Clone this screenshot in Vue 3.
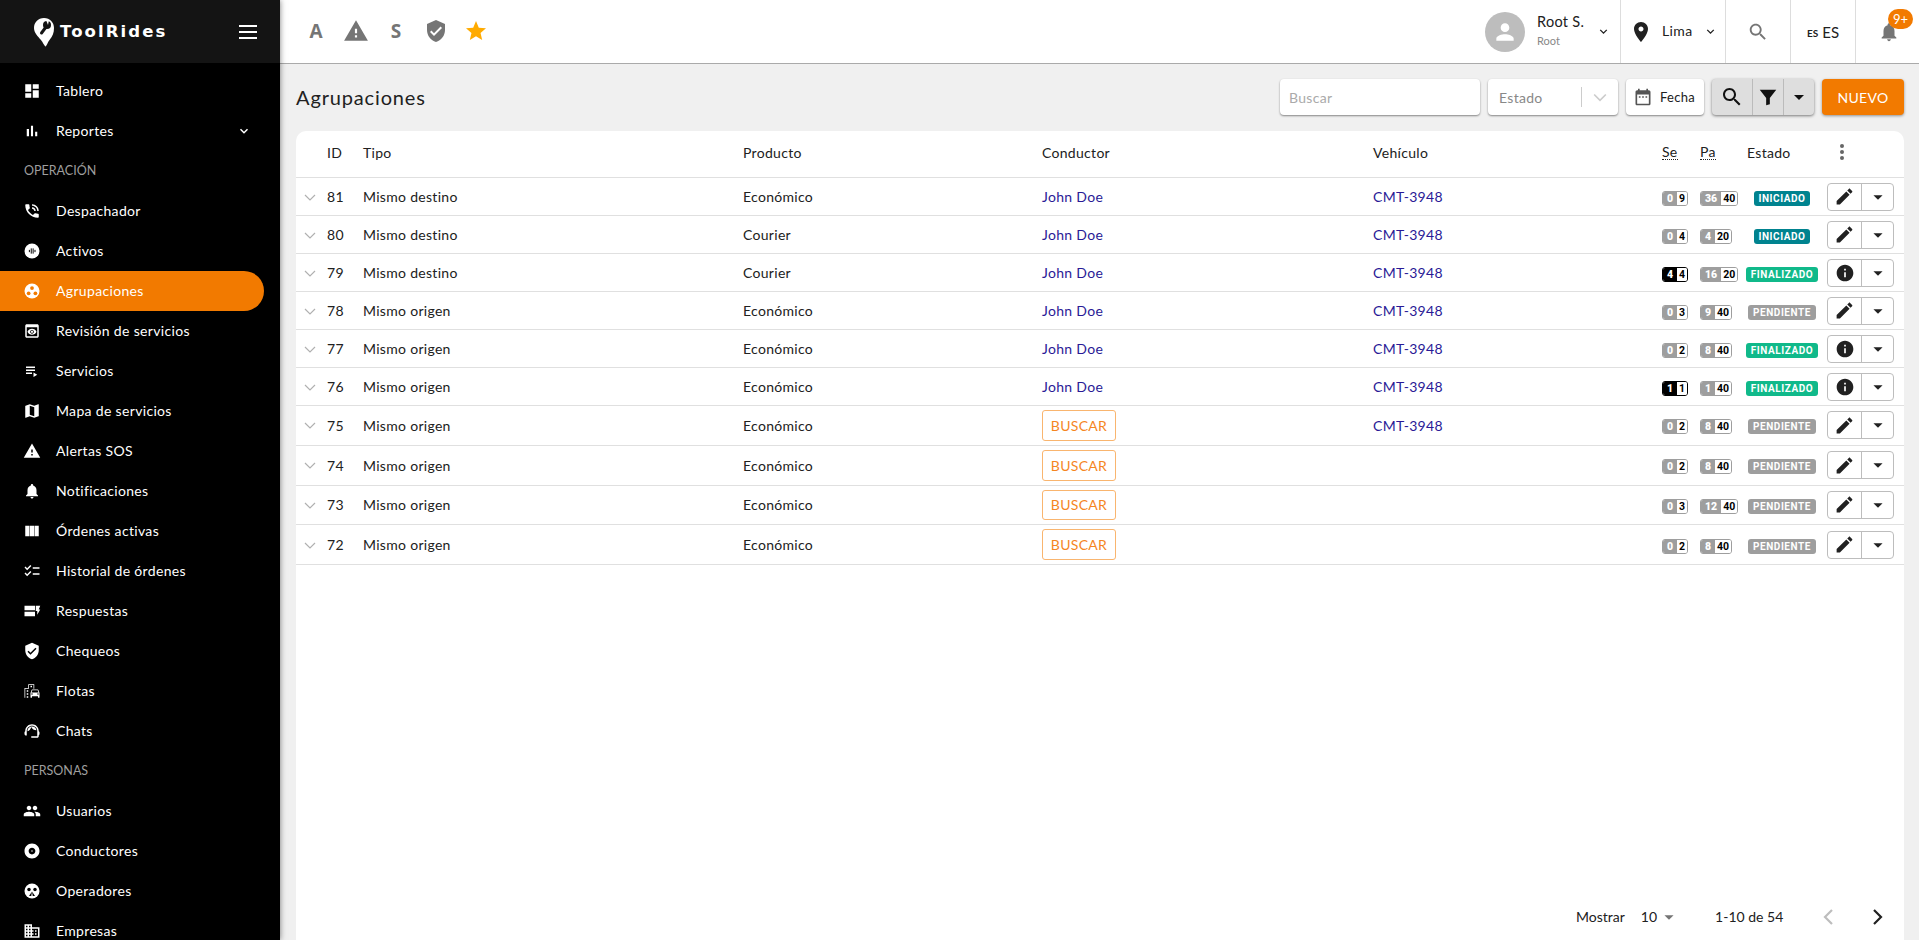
<template>
  <div class="layout">
    <aside class="sidebar">
      <div class="brand">
        <svg class="brand-pin" viewBox="0 0 22 30" width="22" height="30">
          <path fill="#fff" d="M11 1C5 1 1 5.5 1 11c0 5 4 8.500 7 12 1.800 2.200 3.500 6 4.500 6.500 1 0 2-4 4-6.500 3-3.500 4.500-7 4.500-12C21 5.500 17 1 11 1z" />
          <path d="M8.500 16l4.500-6" stroke="#141414" stroke-width="3" stroke-linecap="round" />
          <circle cx="14" cy="8" r="4" fill="#141414" />
          <path fill="#fff" d="M13 3h3l-1 5z" />
        </svg>
        <span class="brand-name">ToolRides</span>
        <span class="burger"><i></i><i></i><i></i></span>
      </div>
      <nav class="menu">
        <template v-for="item in menu" :key="item.label">
          <div v-if="item.section" class="menu-section">{{ item.label }}</div>
          <div v-else class="menu-item" :class="{ active: item.active }">
            <svg v-if="item.custom === 'activos'" class="menu-icon" viewBox="0 0 24 24">
              <circle cx="12" cy="12" r="10" fill="#fff" />
              <path d="M8.500 10.500v3M11 8.500v7M13.500 8.500v7M16 10.500v3" stroke="#000" stroke-width="1.300" />
            </svg>
            <svg v-else-if="item.custom === 'group'" class="menu-icon" viewBox="0 0 24 24">
              <circle cx="12" cy="12" r="10" fill="#fff" />
              <circle cx="12" cy="8" r="2.500" fill="#f27a00" />
              <circle cx="7.500" cy="15" r="2.500" fill="#f27a00" />
              <circle cx="16.500" cy="15" r="2.500" fill="#f27a00" />
            </svg>
            <svg v-else-if="item.custom === 'face'" class="menu-icon" viewBox="0 0 24 24">
              <circle cx="12" cy="12" r="10" fill="#fff" />
              <circle cx="8" cy="10" r="2.300" fill="#000" />
              <circle cx="16" cy="10" r="2.300" fill="#000" />
              <path d="M12 12.500l-4 6h3zM12 12.500l4 6h-3z" fill="#000" />
            </svg>
            <svg v-else class="menu-icon" viewBox="0 0 24 24"><path fill="#fff" :d="item.icon" /></svg>
            <span class="menu-label">{{ item.label }}</span>
            <svg v-if="item.more" class="menu-more" viewBox="0 0 24 24"><path d="M6 9l6 6 6-6" fill="none" stroke="#fff" stroke-width="2.5" /></svg>
          </div>
        </template>
      </nav>
    </aside>

    <div class="content">
      <header class="topbar">
        <div class="quick">
          <span class="quick-item quick-letter">A</span>
          <span class="quick-item"><svg viewBox="0 0 24 24" width="26" height="26"><path fill="#757575" :d="icons.warning" /></svg></span>
          <span class="quick-item quick-letter">S</span>
          <span class="quick-item"><svg viewBox="0 0 24 24" width="24" height="24"><path fill="#757575" :d="icons.verified" /></svg></span>
          <span class="quick-item"><svg viewBox="0 0 24 24" width="24" height="24"><path fill="#ffab00" d="M12 17.27L18.18 21l-1.64-7.03L22 9.24l-7.19-.61L12 2 9.19 8.63 2 9.24l5.46 4.73L5.82 21z" /></svg></span>
        </div>
        <div class="top-user">
          <span class="avatar">
            <svg viewBox="0 0 24 24" width="26" height="26"><path fill="#fff" d="M12 12c2.21 0 4-1.79 4-4s-1.79-4-4-4-4 1.79-4 4 1.79 4 4 4zm0 2c-2.67 0-8 1.34-8 4v2h16v-2c0-2.66-5.33-4-8-4z" /></svg>
          </span>
          <span class="user-text">
            <span class="user-name">Root S.</span>
            <span class="user-role">Root</span>
          </span>
          <svg class="top-chevron" viewBox="0 0 24 24"><path d="M6 9l6 6 6-6" fill="none" stroke="#222" stroke-width="2.5" /></svg>
        </div>
        <div class="top-cell top-place">
          <svg viewBox="0 0 24 24" width="24" height="24"><path fill="#212121" d="M12 2C8.13 2 5 5.13 5 9c0 5.25 7 13 7 13s7-7.75 7-13c0-3.87-3.13-7-7-7zm0 9.500c-1.38 0-2.500-1.120-2.500-2.500s1.120-2.500 2.500-2.500 2.500 1.120 2.500 2.500-1.120 2.500-2.500 2.500z" /></svg>
          <span class="place-name">Lima</span>
          <svg class="top-chevron" viewBox="0 0 24 24"><path d="M6 9l6 6 6-6" fill="none" stroke="#222" stroke-width="2.5" /></svg>
        </div>
        <div class="top-cell top-search">
          <svg viewBox="0 0 24 24" width="22" height="22"><path fill="#757575" :d="icons.search" /></svg>
        </div>
        <div class="top-cell top-lang"><b>ES</b> ES</div>
        <div class="top-cell top-bell">
          <svg viewBox="0 0 24 24" width="22" height="22"><path fill="#757575" :d="icons.bell" /></svg>
          <span class="bell-badge">9+</span>
        </div>
      </header>

      <main class="page">
        <div class="toolbar">
          <h1 class="title">Agrupaciones</h1>
          <div class="field field-search">Buscar</div>
          <div class="field field-state">
            <span>Estado</span>
            <i class="field-sep"></i>
            <svg viewBox="0 0 24 24" width="20" height="20"><path d="M5 9l7 7 7-7" fill="none" stroke="#ccc" stroke-width="2" /></svg>
          </div>
          <div class="field field-date">
            <svg viewBox="0 0 24 24" width="20" height="20"><path fill="#555" d="M19 4h-1V2h-2v2H8V2H6v2H5c-1.1 0-2 .9-2 2v14c0 1.1.9 2 2 2h14c1.1 0 2-.9 2-2V6c0-1.1-.9-2-2-2zm0 16H5V9h14v11zM7 11h2v2H7zm4 0h2v2h-2zm4 0h2v2h-2z" /></svg>
            <span>Fecha</span>
          </div>
          <div class="tool-group">
            <span class="tool tool-search"><svg viewBox="0 0 24 24" width="24" height="24"><path fill="#111" :d="icons.search" /></svg></span>
            <span class="tool tool-filter"><svg viewBox="0 0 24 24" width="22" height="22"><path fill="#111" d="M3 4h18l-7 9v7l-4 1v-8z" /></svg></span>
            <span class="tool tool-caret"><svg viewBox="0 0 24 24" width="24" height="24"><path fill="#111" d="M7 10l5 5 5-5z" /></svg></span>
          </div>
          <button class="btn-new">NUEVO</button>
        </div>

        <section class="card">
          <div class="row row-head">
            <span></span>
            <span>ID</span>
            <span>Tipo</span>
            <span>Producto</span>
            <span>Conductor</span>
            <span>Vehículo</span>
            <span class="abbr">Se</span>
            <span class="abbr">Pa</span>
            <span>Estado</span>
            <span class="head-dots"><i></i><i></i><i></i></span>
          </div>
          <div v-for="r in rows" :key="r.id" class="row">
            <svg class="row-toggle" viewBox="0 0 12 12"><path d="M1 4l5 5 5-5" fill="none" stroke="#b0b0b0" stroke-width="1.2" /></svg>
            <span>{{ r.id }}</span>
            <span>{{ r.tipo }}</span>
            <span>{{ r.producto }}</span>
            <span>
              <a v-if="r.driver" class="link">John Doe</a>
              <button v-else class="btn-find">BUSCAR</button>
            </span>
            <span><a v-if="r.vehicle" class="link">CMT-3948</a></span>
            <span class="count-cell">
              <span class="count" :class="{ full: r.se[0] === r.se[1] }">
                <b>{{ r.se[0] }}</b><em>{{ r.se[1] }}</em>
              </span>
            </span>
            <span class="count-cell">
              <span class="count">
                <b>{{ r.pa[0] }}</b><em>{{ r.pa[1] }}</em>
              </span>
            </span>
            <span class="status-cell">
              <span class="status" :class="r.estado.toLowerCase()">{{ r.estado }}</span>
            </span>
            <span class="actions">
              <span class="action-main">
                <svg v-if="r.estado === 'FINALIZADO'" viewBox="0 0 24 24" width="20" height="20"><path fill="#212121" d="M12 2C6.48 2 2 6.48 2 12s4.48 10 10 10 10-4.48 10-10S17.52 2 12 2zm1 15h-2v-6h2v6zm0-8h-2V7h2v2z" /></svg>
                <svg v-else viewBox="0 0 24 24" width="21" height="21"><path fill="#212121" d="M3 17.25V21h3.75L17.81 9.94l-3.75-3.75L3 17.25zM20.71 7.04c.39-.39.39-1.02 0-1.41l-2.34-2.34c-.39-.39-1.02-.39-1.41 0l-1.83 1.83 3.75 3.75 1.83-1.83z" /></svg>
              </span>
              <span class="action-more">
                <svg viewBox="0 0 24 24" width="22" height="22"><path fill="#212121" d="M7 10l5 5 5-5z" /></svg>
              </span>
            </span>
          </div>

          <footer class="pager">
            <span class="pager-label">Mostrar</span>
            <span class="pager-size">10</span>
            <svg class="pager-caret" viewBox="0 0 24 24" width="22" height="22"><path fill="#757575" d="M7 10l5 5 5-5z" /></svg>
            <span class="pager-range">1-10 de 54</span>
            <svg class="pager-prev" viewBox="0 0 24 24" width="24" height="24"><path d="M15 5l-7 7 7 7" fill="none" stroke="#bdbdbd" stroke-width="2.2" /></svg>
            <svg class="pager-next" viewBox="0 0 24 24" width="24" height="24"><path d="M9 5l7 7-7 7" fill="none" stroke="#212121" stroke-width="2.2" /></svg>
          </footer>
        </section>
      </main>
    </div>
  </div>
</template>

<script setup>
const icons = {
  dashboard: 'M3 13h8V3H3v10zm0 8h8v-6H3v6zm10 0h8V11h-8v10zm0-18v6h8V3h-8z',
  bars: 'M5 9.2h3V19H5zM10.6 5h2.8v14h-2.8zm5.6 8H19v6h-2.8z',
  phone: 'M20 15.5c-1.25 0-2.45-.2-3.57-.57-.35-.11-.74-.03-1.02.24l-2.2 2.2c-2.83-1.44-5.15-3.75-6.59-6.59l2.2-2.21c.28-.26.36-.65.25-1C8.7 6.45 8.5 5.25 8.5 4c0-.55-.45-1-1-1H4c-.55 0-1 .45-1 1 0 9.39 7.61 17 17 17 .55 0 1-.45 1-1v-3.5c0-.55-.45-1-1-1zM19 12h2c0-4.97-4.03-9-9-9v2c3.87 0 7 3.13 7 7zm-4 0h2c0-2.76-2.24-5-5-5v2c1.66 0 3 1.34 3 3z',
  preview: 'M19 3H5c-1.11 0-2 .9-2 2v14c0 1.1.89 2 2 2h14c1.1 0 2-.9 2-2V5c0-1.1-.89-2-2-2zm0 16H5V7h14v12zm-5.5-6c0 .83-.67 1.5-1.5 1.5s-1.5-.67-1.5-1.5.67-1.5 1.5-1.5 1.5.67 1.5 1.5zM12 9c-2.73 0-5.06 1.66-6 4 .94 2.34 3.27 4 6 4s5.06-1.66 6-4c-.94-2.34-3.27-4-6-4zm0 6.5c-1.38 0-2.5-1.12-2.5-2.5s1.12-2.5 2.5-2.5 2.5 1.12 2.5 2.5-1.12 2.5-2.5 2.5z',
  playlist: 'M4 10h12v2H4zm0-4h12v2H4zm0 8h8v2H4zm10 0v6l5-3z',
  map: 'M20.5 3l-.16.03L15 5.1 9 3 3.36 4.9c-.21.07-.36.25-.36.48V20.5c0 .28.22.5.5.5l.16-.03L9 18.9l6 2.1 5.64-1.9c.21-.07.36-.25.36-.48V3.5c0-.28-.22-.5-.5-.5zM15 19l-6-2.11V5l6 2.11V19z',
  warning: 'M1 21h22L12 2 1 21zm12-3h-2v-2h2v2zm0-4h-2v-4h2v4z',
  bell: 'M12 22c1.1 0 2-.9 2-2h-4c0 1.1.89 2 2 2zm6-6v-5c0-3.07-1.64-5.64-4.5-6.32V4c0-.83-.67-1.5-1.5-1.5s-1.5.67-1.5 1.5v.68C7.63 5.36 6 7.92 6 11v5l-2 2v1h16v-1l-2-2z',
  week: 'M3 5h5.6v14H3zM9.2 5h5.6v14H9.2zM15.4 5H21v14h-5.6z',
  checklist: 'M22 7h-9v2h9V7zm0 8h-9v2h9v-2zM5.54 11L2 7.46l1.41-1.41 2.12 2.12 4.24-4.24 1.41 1.41L5.54 11zm0 8L2 15.46l1.41-1.41 2.12 2.12 4.24-4.24 1.41 1.41L5.54 19z',
  replies: 'M2 5h14v6H2zM2 13h14v6H2zM17 5h6l-2 5h2l-4 7v-5h-2z',
  verified: 'M12 1L3 5v6c0 5.55 3.84 10.74 9 12 5.16-1.26 9-6.45 9-12V5l-9-4zm-2 16l-4-4 1.41-1.41L10 14.17l6.59-6.59L18 9l-8 8z',
  transport: 'M20.57 10.66c-.14-.4-.52-.66-.97-.66h-7.19c-.46 0-.83.26-.98.66L10 14.77l.01 5.51c0 .38.31.72.69.72h.62c.38 0 .68-.38.68-.76V19h8v1.24c0 .38.31.76.69.76h.61c.38 0 .69-.34.69-.72l.01-1.37v-4.14l-1.43-4.07zm-8.16.34h7.19l1.03 3h-9.25l1.03-3zM12 17c-.55 0-1-.45-1-1s.45-1 1-1 1 .45 1 1-.45 1-1 1zm8 0c-.55 0-1-.45-1-1s.45-1 1-1 1 .45 1 1-.45 1-1 1zM14 9h1V3H7v5H2v13h1V9h5V4h6zM5 11h2v2H5zM10 5h2v2h-2zM5 15h2v2H5zM5 19h2v2H5z',
  agent: 'M21 12.22C21 6.73 16.74 3 12 3c-4.69 0-9 3.65-9 9.28-.6.34-1 .98-1 1.72v2c0 1.1.9 2 2 2h1v-6.1c0-3.87 3.13-7 7-7s7 3.13 7 7V19h-8v2h8c1.1 0 2-.9 2-2v-1.22c.59-.31 1-.92 1-1.64v-2.3c0-.7-.41-1.31-1-1.62zM18 11.03C17.52 8.18 15.04 6 12.05 6c-3.03 0-6.29 2.51-6.03 6.45 2.47-1.01 4.33-3.21 4.86-5.89 1.31 2.63 4 4.44 7.12 4.47z',
  people: 'M16 11c1.66 0 2.99-1.34 2.99-3S17.66 5 16 5c-1.66 0-3 1.34-3 3s1.34 3 3 3zm-8 0c1.66 0 2.99-1.34 2.99-3S9.66 5 8 5C6.34 5 5 6.34 5 8s1.34 3 3 3zm0 2c-2.33 0-7 1.17-7 3.5V19h14v-2.5c0-2.33-4.67-3.5-7-3.5zm8 0c-.29 0-.62.02-.97.05 1.16.84 1.97 1.97 1.97 3.45V19h6v-2.5c0-2.33-4.67-3.5-7-3.5z',
  album: 'M12 2C6.48 2 2 6.48 2 12s4.48 10 10 10 10-4.48 10-10S17.52 2 12 2zm0 14.5c-2.49 0-4.5-2.01-4.5-4.5S9.51 7.5 12 7.5s4.5 2.01 4.5 4.5-2.01 4.5-4.5 4.5zm0-5.5c-.55 0-1 .45-1 1s.45 1 1 1 1-.45 1-1-.45-1-1-1z',
  domain: 'M12 7V3H2v18h20V7H12zM6 19H4v-2h2v2zm0-4H4v-2h2v2zm0-4H4V9h2v2zm0-4H4V5h2v2zm4 12H8v-2h2v2zm0-4H8v-2h2v2zm0-4H8V9h2v2zm0-4H8V5h2v2zm10 12h-8v-2h2v-2h-2v-2h2v-2h-2V9h8v10zm-2-8h-2v2h2v-2zm0 4h-2v2h2v-2z',
  search: 'M15.5 14h-.79l-.28-.27C15.41 12.59 16 11.11 16 9.5 16 5.91 13.09 3 9.5 3S3 5.91 3 9.5 5.91 16 9.5 16c1.61 0 3.09-.59 4.23-1.57l.27.28v.79l5 4.99L20.49 19l-4.99-5zm-6 0C7.01 14 5 11.99 5 9.5S7.01 5 9.5 5 14 7.01 14 9.5 11.99 14 9.5 14z'
}

const menu = [
  { label: 'Tablero', icon: icons.dashboard },
  { label: 'Reportes', icon: icons.bars, more: true },
  { label: 'OPERACIÓN', section: true },
  { label: 'Despachador', icon: icons.phone },
  { label: 'Activos', custom: 'activos' },
  { label: 'Agrupaciones', custom: 'group', active: true },
  { label: 'Revisión de servicios', icon: icons.preview },
  { label: 'Servicios', icon: icons.playlist },
  { label: 'Mapa de servicios', icon: icons.map },
  { label: 'Alertas SOS', icon: icons.warning },
  { label: 'Notificaciones', icon: icons.bell },
  { label: 'Órdenes activas', icon: icons.week },
  { label: 'Historial de órdenes', icon: icons.checklist },
  { label: 'Respuestas', icon: icons.replies },
  { label: 'Chequeos', icon: icons.verified },
  { label: 'Flotas', icon: icons.transport },
  { label: 'Chats', icon: icons.agent },
  { label: 'PERSONAS', section: true },
  { label: 'Usuarios', icon: icons.people },
  { label: 'Conductores', icon: icons.album },
  { label: 'Operadores', custom: 'face' },
  { label: 'Empresas', icon: icons.domain }
]

const rows = [
  { id: 81, tipo: 'Mismo destino', producto: 'Económico', driver: true, vehicle: true, se: [0, 9], pa: [36, 40], estado: 'INICIADO' },
  { id: 80, tipo: 'Mismo destino', producto: 'Courier', driver: true, vehicle: true, se: [0, 4], pa: [4, 20], estado: 'INICIADO' },
  { id: 79, tipo: 'Mismo destino', producto: 'Courier', driver: true, vehicle: true, se: [4, 4], pa: [16, 20], estado: 'FINALIZADO' },
  { id: 78, tipo: 'Mismo origen', producto: 'Económico', driver: true, vehicle: true, se: [0, 3], pa: [9, 40], estado: 'PENDIENTE' },
  { id: 77, tipo: 'Mismo origen', producto: 'Económico', driver: true, vehicle: true, se: [0, 2], pa: [8, 40], estado: 'FINALIZADO' },
  { id: 76, tipo: 'Mismo origen', producto: 'Económico', driver: true, vehicle: true, se: [1, 1], pa: [1, 40], estado: 'FINALIZADO' },
  { id: 75, tipo: 'Mismo origen', producto: 'Económico', driver: false, vehicle: true, se: [0, 2], pa: [8, 40], estado: 'PENDIENTE' },
  { id: 74, tipo: 'Mismo origen', producto: 'Económico', driver: false, vehicle: false, se: [0, 2], pa: [8, 40], estado: 'PENDIENTE' },
  { id: 73, tipo: 'Mismo origen', producto: 'Económico', driver: false, vehicle: false, se: [0, 3], pa: [12, 40], estado: 'PENDIENTE' },
  { id: 72, tipo: 'Mismo origen', producto: 'Económico', driver: false, vehicle: false, se: [0, 2], pa: [8, 40], estado: 'PENDIENTE' }
]
</script>

<style scoped>
.layout {
  display: flex;
  height: 940px;
  overflow: hidden;
  font-family: Lato, "Open Sans", sans-serif;
  font-size: 14px;
  color: #212121;
}

/* sidebar */
.sidebar {
  width: 280px;
  flex: none;
  background: #000;
  overflow: hidden;
  color: #fff;
  box-shadow: 0 0 6px rgba(0, 0, 0, 0.5);
  z-index: 2;
}

.brand {
  height: 63px;
  background: #141414;
  display: flex;
  align-items: center;
  padding-left: 33px;
}

.brand-pin {
  flex: none;
}

.brand-name {
  font-family: "DejaVu Sans", sans-serif;
  font-weight: 700;
  font-size: 16.5px;
  letter-spacing: 2.1px;
  margin-left: 5px;
}

.burger {
  margin-left: auto;
  margin-right: 23px;
  width: 18px;
  display: flex;
  flex-direction: column;
  gap: 4px;
}

.burger i {
  height: 2px;
  background: #fff;
}

.menu {
  padding-top: 8px;
}

.menu-section {
  height: 40px;
  line-height: 40px;
  padding-left: 24px;
  font-size: 12.5px;
  color: #9e9e9e;
}

.menu-item {
  height: 40px;
  display: flex;
  align-items: center;
  padding-left: 23px;
  gap: 15px;
  letter-spacing: 0.33px;
  width: 264px;
  box-sizing: border-box;
}

.menu-label {
  padding-bottom: 2px;
}

.menu-item.active {
  background: #f27a00;
  border-radius: 0 20px 20px 0;
}

.menu-icon {
  width: 18px;
  height: 18px;
  flex: none;
}

.menu-more {
  width: 14px;
  height: 14px;
  margin-left: auto;
  margin-right: 13px;
}

/* top bar */
.content {
  flex: 1;
  min-width: 0;
  display: flex;
  flex-direction: column;
}

.topbar {
  height: 64px;
  flex: none;
  box-sizing: border-box;
  background: #fff;
  border-bottom: 1px solid #aaa;
  display: flex;
  align-items: stretch;
}

.quick {
  display: flex;
  align-items: center;
  padding: 0 0 1px 16px;
  margin-right: auto;
}

.quick-item {
  width: 40px;
  display: flex;
  justify-content: center;
  align-items: center;
}

.quick-letter {
  font-family: "Open Sans", sans-serif;
  font-weight: 700;
  font-size: 19px;
  color: #757575;
}

.top-user {
  width: 150px;
  box-sizing: border-box;
  padding-left: 15px;
  display: flex;
  align-items: center;
}

.avatar {
  width: 40px;
  height: 40px;
  border-radius: 50%;
  background: #bdbdbd;
  display: flex;
  align-items: center;
  justify-content: center;
  flex: none;
}

.user-text {
  margin: 0 0 4px 12px;
  display: flex;
  flex-direction: column;
  gap: 3px;
}

.user-name {
  font-size: 14.5px;
  line-height: 18px;
  letter-spacing: 0.3px;
}

.user-role {
  font-size: 11px;
  line-height: 13px;
  color: #888;
}

.top-chevron {
  width: 13px;
  height: 13px;
  flex: none;
}

.top-user .top-chevron {
  margin-left: auto;
  margin-right: 10px;
}

.top-cell {
  border-left: 1px solid #ddd;
  box-sizing: border-box;
  display: flex;
  align-items: center;
}

.top-place {
  width: 105px;
  padding-left: 8px;
}

.place-name {
  margin: 0 0 2px 9px;
  letter-spacing: 0.4px;
}

.top-place .top-chevron {
  margin-left: 11px;
}

.top-search,
.top-lang {
  width: 65px;
  justify-content: center;
}

.top-lang {
  gap: 4px;
  font-size: 15px;
}

.top-lang b {
  font-size: 10px;
  padding-top: 2px;
}

.top-bell {
  width: 64px;
  justify-content: center;
  position: relative;
  padding-left: 2px;
}

.bell-badge {
  position: absolute;
  top: 9px;
  left: 32px;
  width: 25px;
  height: 20px;
  border-radius: 10px;
  background: #f27a00;
  color: #fff;
  font-size: 13px;
  line-height: 20px;
  text-align: center;
}

/* page */
.page {
  flex: 1;
  min-height: 0;
  background: #f0f0f0;
  padding: 15px 15px 0 16px;
  display: flex;
  flex-direction: column;
}

.toolbar {
  display: flex;
  align-items: center;
  height: 36px;
  gap: 8px;
  margin-bottom: 16px;
}

.title {
  margin: 0 auto 0 0;
  font-size: 20px;
  font-weight: 400;
  letter-spacing: 0.85px;
}

.field {
  height: 36px;
  box-sizing: border-box;
  background: #fff;
  border-radius: 4px;
  box-shadow: 0 1px 2px rgba(0, 0, 0, 0.45);
  display: flex;
  align-items: center;
}

.field-search {
  width: 200px;
  padding-left: 9px;
  color: #aaa;
  letter-spacing: 0.3px;
}

.field-state {
  width: 130px;
  padding-left: 11px;
  color: #888;
  letter-spacing: 0.3px;
}

.field-sep {
  width: 1px;
  height: 20px;
  background: #ccc;
  margin-left: auto;
}

.field-state svg {
  margin: 0 8px;
}

.field-date {
  width: 78px;
  padding-left: 7px;
  gap: 7px;
  font-size: 13px;
  letter-spacing: 0.3px;
}

.tool-group {
  width: 102px;
  height: 36px;
  border-radius: 4px;
  background: #dedede;
  box-shadow: 0 1px 3px rgba(0, 0, 0, 0.5);
  display: flex;
}

.tool {
  display: flex;
  align-items: center;
  justify-content: center;
}

.tool-search {
  width: 40px;
}

.tool-filter {
  width: 30px;
  border-left: 1px solid #bbb;
  border-right: 1px solid #bbb;
}

.tool-caret {
  flex: 1;
}

.btn-new {
  width: 82px;
  height: 36px;
  border: none;
  border-radius: 4px;
  background: #f27a00;
  color: #fff;
  font-family: inherit;
  font-size: 14px;
  letter-spacing: 0.3px;
  box-shadow: 0 1px 3px rgba(0, 0, 0, 0.4);
}

/* table */
.card {
  flex: 1;
  min-height: 0;
  background: #fff;
  border-radius: 10px 10px 0 0;
  display: flex;
  flex-direction: column;
}

.row {
  display: grid;
  grid-template-columns: 31px 36px 380px 299px 331px 289px 38px 47px 80px 67px;
  align-items: center;
  min-height: 38px;
  box-sizing: border-box;
  padding: 4px 0;
  border-bottom: 1px solid #e0e0e0;
  letter-spacing: 0.3px;
}

.row-head {
  height: 47px;
  padding: 2px 0 6px;
}

.row-toggle {
  width: 12px;
  height: 12px;
  margin-left: 8px;
}

.abbr {
  justify-self: start;
  border-bottom: 1px dotted #212121;
  line-height: 15px;
}

.head-dots {
  display: flex;
  flex-direction: column;
  gap: 2px;
  padding-left: 13px;
}

.head-dots i {
  width: 4px;
  height: 4px;
  border-radius: 50%;
  background: #666;
}

.link {
  color: #2a1a96;
}

.btn-find {
  height: 30.75px;
  width: 74px;
  box-sizing: border-box;
  background: #fff;
  border: 1px solid #f9b56f;
  border-radius: 3px;
  color: #f5861f;
  font-family: inherit;
  font-size: 14px;
  letter-spacing: 0.3px;
  display: block;
}

.count-cell {
  display: flex;
  padding-top: 3px;
}

.count {
  display: inline-flex;
  height: 15px;
  box-sizing: border-box;
  border: 1px solid #9e9e9e;
  border-radius: 3px;
  overflow: hidden;
  font-family: Roboto, sans-serif;
  font-size: 10.5px;
  font-weight: 700;
  line-height: 13px;
  letter-spacing: 0;
}

.count b {
  background: #9e9e9e;
  color: #fff;
  padding: 0 4px;
  min-width: 6px;
  text-align: center;
}

.count em {
  font-style: normal;
  color: #000;
  background: #fff;
  padding: 0 2px;
}

.count.full {
  border-color: #000;
}

.count.full b {
  background: #000;
}

.status-cell {
  display: flex;
  justify-content: center;
  padding: 3px 10px 0 0;
}

.status {
  height: 15px;
  line-height: 15px;
  padding: 0 5px;
  border-radius: 3px;
  color: #fff;
  font-family: Roboto, sans-serif;
  font-size: 10px;
  font-weight: 700;
  letter-spacing: 0.55px;
}

.status.iniciado {
  background: #00838f;
}

.status.finalizado {
  background: #10b98a;
}

.status.pendiente {
  background: #9e9e9e;
}

.actions {
  display: flex;
  height: 28px;
  box-sizing: border-box;
  border: 1px solid #bdbdbd;
  border-radius: 4px;
}

.action-main,
.action-more {
  display: flex;
  align-items: center;
  justify-content: center;
}

.action-main {
  width: 33px;
  border-right: 1px solid #bdbdbd;
}

.action-more {
  flex: 1;
}

.pager {
  margin-top: auto;
  height: 47px;
  flex: none;
  display: flex;
  align-items: center;
  padding-left: 1280px;
}

.pager-size {
  margin-left: 16px;
}

.pager-caret {
  margin-left: 1px;
}

.pager-range {
  margin-left: 35px;
}

.pager-prev {
  margin-left: 34px;
}

.pager-next {
  margin-left: 24px;
}
</style>

<style>
html,
body {
  margin: 0;
  overflow: hidden;
}
</style>
